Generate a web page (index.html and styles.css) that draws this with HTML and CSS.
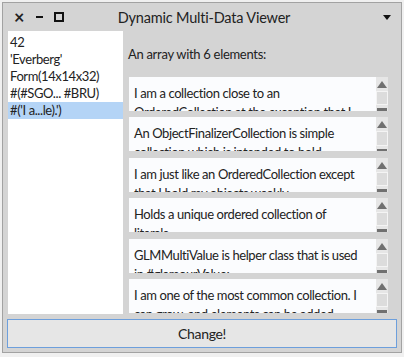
FILE: index.html
```html
<!DOCTYPE html>
<html lang="en">
<head>
    <meta charset="UTF-8">
    <title>Dynamic Multi-Data Viewer</title>
    <link rel="stylesheet" href="styles.css">
</head>
<body>
    <div class="window">
        <div class="titlebar">
            <div class="controls">
                <span class="ctl close">×</span>
                <span class="ctl minimize"></span>
                <span class="ctl maximize"></span>
            </div>
            <div class="title">Dynamic Multi-Data Viewer</div>
            <div class="menu-arrow"></div>
        </div>

        <div class="content">
            <div class="list">
                <div class="row">42</div>
                <div class="row">'Everberg'</div>
                <div class="row">Form(14x14x32)</div>
                <div class="row">#(#SGO... #BRU)</div>
                <div class="row selected">#('I a...le).')</div>
            </div>

            <div class="details">
                <div class="caption">An array with 6 elements:</div>
                <div class="cards">
                    <div class="card">
                        <div class="text">I am a collection close to an OrderedCollection at the exception that I remove elements</div>
                        <div class="scrollbar"><div class="up"></div><div class="thumb"></div><div class="down"></div></div>
                    </div>
                    <div class="card">
                        <div class="text">An ObjectFinalizerCollection is simple collection which is intended to hold</div>
                        <div class="scrollbar"><div class="up"></div><div class="thumb"></div><div class="down"></div></div>
                    </div>
                    <div class="card">
                        <div class="text">I am just like an OrderedCollection except that I hold my objects weakly.</div>
                        <div class="scrollbar"><div class="up"></div><div class="thumb"></div><div class="down"></div></div>
                    </div>
                    <div class="card">
                        <div class="text">Holds a unique ordered collection of<br>literals.</div>
                        <div class="scrollbar"><div class="up"></div><div class="thumb"></div><div class="down"></div></div>
                    </div>
                    <div class="card">
                        <div class="text">GLMMultiValue is helper class that is used in #glamourValue:</div>
                        <div class="scrollbar"><div class="up"></div><div class="thumb"></div><div class="down"></div></div>
                    </div>
                    <div class="card">
                        <div class="text">I am one of the most common collection. I can grow, and elements can be added</div>
                        <div class="scrollbar"><div class="up"></div><div class="thumb"></div><div class="down"></div></div>
                    </div>
                </div>
            </div>
        </div>

        <div class="footer">
            <button class="change">Change!</button>
        </div>
    </div>
</body>
</html>
```

FILE: styles.css
```css
body {
    margin: 0;
    background-color: #f0f0f0;
    font-family: Lato, "Liberation Sans", sans-serif;
    color: #222;
}

.window {
    margin: 2px;
    width: 398px;
    height: 349px;
    border: 1px solid #a2a2a2;
    background-color: #d4d4d4;
    display: flex;
    flex-direction: column;
}

.titlebar {
    height: 28px;
    display: flex;
    align-items: center;
    padding: 0 6px 0 10px;
}

.controls {
    display: flex;
    align-items: center;
    gap: 10px;
    width: 100px;
}

.ctl {
    display: block;
}

.close {
    font-size: 18px;
    font-weight: bold;
    line-height: 14px;
    width: 8px;
    text-align: center;
    margin-left: 1px;
}

.minimize {
    width: 7px;
    height: 2px;
    background-color: #111;
    margin-left: 4px;
}

.maximize {
    width: 6px;
    height: 6px;
    border: 2px solid #111;
    margin-left: 1px;
}

.title {
    flex: 1;
    text-align: center;
    font-size: 14.5px;
    letter-spacing: -0.2px;
    padding-right: 88px;
}

.menu-arrow {
    width: 0;
    height: 0;
    border-left: 4px solid transparent;
    border-right: 4px solid transparent;
    border-top: 5px solid #111;
    margin-right: 4px;
}

.content {
    flex: 1;
    display: flex;
    min-height: 0;
    padding: 0 5px 0 5px;
}

.list {
    width: 115px;
    background-color: #fff;
    padding-top: 3px;
    font-size: 13px;
    letter-spacing: -0.4px;
}

.list .row {
    height: 17px;
    line-height: 17px;
    padding-left: 2px;
    white-space: nowrap;
}

.list .row.selected {
    background-color: #b4d4f6;
}

.details {
    flex: 1;
    display: flex;
    flex-direction: column;
    padding-left: 5px;
    min-height: 0;
}

.caption {
    font-size: 13px;
    letter-spacing: -0.3px;
    height: 46px;
    line-height: 46px;
}

.cards {
    flex: 1;
    display: flex;
    flex-direction: column;
    gap: 6.4px;
    overflow: hidden;
    padding-left: 1px;
    width: 259px;
}

.card {
    flex: none;
    height: 34px;
    display: flex;
    background-color: #fbfcfe;
    overflow: hidden;
}

.card .text {
    flex: 1;
    padding: 7px 10px 0 5px;
    font-size: 13px;
    letter-spacing: -0.4px;
    line-height: 19px;
    overflow: hidden;
}

.scrollbar {
    width: 12px;
    background-color: #e6e6e6;
    display: flex;
    flex-direction: column;
    align-items: center;
}

.scrollbar .up {
    margin-top: 4px;
    width: 0;
    height: 0;
    border-left: 5px solid transparent;
    border-right: 5px solid transparent;
    border-bottom: 7px solid #707070;
}

.scrollbar .thumb {
    margin-top: 3px;
    width: 10px;
    height: 13px;
    background-color: #dcdcdc;
    border: 1px solid #f4f4f4;
}

.scrollbar .down {
    margin-top: 3px;
    width: 10px;
    height: 3px;
    background-color: #707070;
}

.footer {
    padding: 5px 4px 4px 4px;
}

.change {
    display: block;
    width: 100%;
    height: 29px;
    margin: 0;
    background-color: #e6e6e6;
    border: 1px solid #6d9fdc;
    font-family: Lato, "Liberation Sans", sans-serif;
    font-size: 14px;
    letter-spacing: -0.3px;
    color: #222;
}
```
